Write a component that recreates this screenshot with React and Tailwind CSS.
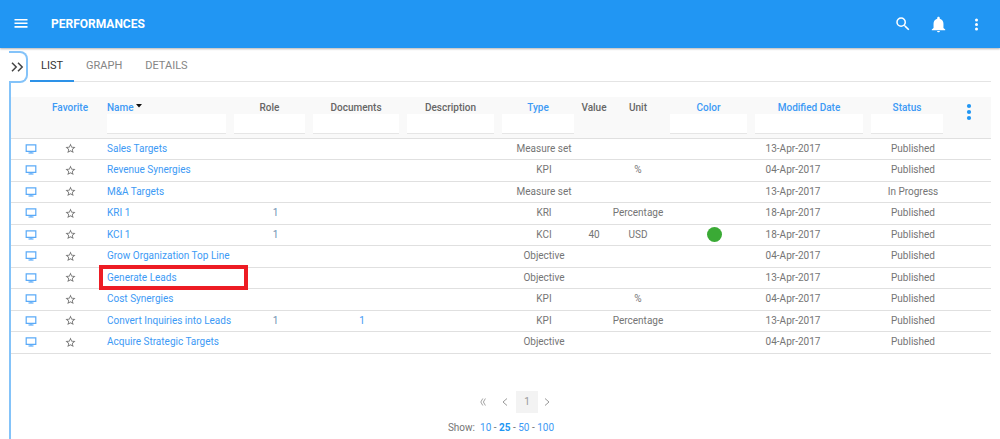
import React, { useState } from 'react';

const columns = [
  { key: 'open', width: 'w-[40px]' },
  { key: 'favorite', label: 'Favorite', width: 'w-[38px]', sortable: true },
  { key: 'name', label: 'Name', width: 'w-[141px]', sortable: true, filter: true, sorted: true },
  { key: 'role', label: 'Role', width: 'w-[79px]', filter: true },
  { key: 'documents', label: 'Documents', width: 'w-[94px]', filter: true },
  { key: 'description', label: 'Description', width: 'w-[95px]', filter: true },
  { key: 'type', label: 'Type', width: 'w-[80px]', sortable: true, filter: true },
  { key: 'value', label: 'Value', width: 'w-[32px]' },
  { key: 'unit', label: 'Unit', width: 'w-[56px]' },
  { key: 'color', label: 'Color', width: 'w-[85px]', sortable: true, filter: true },
  { key: 'modified', label: 'Modified Date', width: 'w-[116px]', sortable: true, filter: true },
  { key: 'status', label: 'Status', width: 'w-[80px]', sortable: true, filter: true },
  { key: 'menu', width: 'w-[44px]' },
];

const rows = [
  { name: 'Sales Targets', type: 'Measure set', modified: '13-Apr-2017', status: 'Published' },
  { name: 'Revenue Synergies', type: 'KPI', unit: '%', modified: '04-Apr-2017', status: 'Published' },
  { name: 'M&A Targets', type: 'Measure set', modified: '13-Apr-2017', status: 'In Progress' },
  { name: 'KRI 1', role: '1', type: 'KRI', unit: 'Percentage', modified: '18-Apr-2017', status: 'Published' },
  { name: 'KCI 1', role: '1', type: 'KCI', value: '40', unit: 'USD', color: true, modified: '18-Apr-2017', status: 'Published' },
  { name: 'Grow Organization Top Line', type: 'Objective', modified: '04-Apr-2017', status: 'Published' },
  { name: 'Generate Leads', type: 'Objective', modified: '13-Apr-2017', status: 'Published', marked: true },
  { name: 'Cost Synergies', type: 'KPI', unit: '%', modified: '04-Apr-2017', status: 'Published' },
  { name: 'Convert Inquiries into Leads', role: '1', documents: '1', type: 'KPI', unit: 'Percentage', modified: '13-Apr-2017', status: 'Published' },
  { name: 'Acquire Strategic Targets', type: 'Objective', modified: '04-Apr-2017', status: 'Published' },
];

const tabs = ['LIST', 'GRAPH', 'DETAILS'];
const pageSizes = [10, 25, 50, 100];

function MonitorIcon() {
  return (
    <svg viewBox="0 0 12 10" className="block w-3 h-[10px]" fill="none" stroke="#5aaaf8">
      <path d="M1.2 0.900h9.600v6.400H1.200z" strokeWidth="1.200" />
      <path d="M3.500 9h5" strokeWidth="1.2" />
      <path d="M5 8h2" />
    </svg>
  );
}

function StarIcon() {
  return (
    <svg viewBox="1 1 22 22" className="block w-[11px] h-[11px]" fill="#757575">
      <path d="M22 9.24l-7.19-.62L12 2 9.19 8.63 2 9.24l5.46 4.73L5.82 21 12 17.27 18.18 21l-1.63-7.03L22 9.24zM12 15.4l-3.76 2.27 1-4.28-3.32-2.88 4.38-.38L12 6.1l1.71 4.04 4.38.38-3.32 2.88 1 4.28L12 15.4z" />
    </svg>
  );
}

function TopBar() {
  return (
    <header className="flex items-center h-12 pl-[14px] pr-4 bg-[#2196f3] text-white shadow-[0_1px_2px_rgba(0,0,0,0.3)]">
      <button aria-label="Menu">
        <svg viewBox="0 0 14 14" className="block w-[14px] h-[14px]" stroke="currentColor" strokeWidth="1.600">
          <path d="M0.500 2.700h13M0.500 6.300h13M0.500 9.900h13" />
        </svg>
      </button>
      <h1 className="ml-[23px] text-[12px] font-bold">PERFORMANCES</h1>
      <div className="ml-auto flex items-center">
        <button aria-label="Search">
          <svg viewBox="0 0 24 24" className="w-[18px] h-[18px]" fill="currentColor">
            <path d="M15.5 14h-.79l-.28-.27A6.47 6.47 0 0 0 16 9.5 6.5 6.5 0 1 0 9.5 16c1.61 0 3.09-.59 4.23-1.57l.27.28v.79l5 4.99L20.49 19l-4.99-5zm-6 0C7.01 14 5 11.99 5 9.5S7.01 5 9.5 5 14 7.01 14 9.5 11.99 14 9.5 14z" />
          </svg>
        </button>
        <button aria-label="Notifications" className="ml-[18px]">
          <svg viewBox="0 0 24 24" className="w-[17px] h-[17px]" fill="currentColor">
            <path d="M12 23c1.1 0 2-.9 2-2h-4c0 1.1.89 2 2 2zm7-6v-6c0-3.5-1.9-6.300-5.200-7.200V3c0-1-.8-1.800-1.800-1.800s-1.800.8-1.800 1.800v.8C6.900 4.700 5 7.500 5 11v6l-2.500 2v1.200h19V19z" />
          </svg>
        </button>
        <button aria-label="More" className="ml-[22px]">
          <svg viewBox="0 0 15 15" className="w-[15px] h-[15px]" fill="currentColor">
            <circle cx="7.500" cy="3" r="1.5" />
            <circle cx="7.500" cy="7.500" r="1.5" />
            <circle cx="7.500" cy="12" r="1.5" />
          </svg>
        </button>
      </div>
    </header>
  );
}

function HeaderCell({ column }) {
  const { key, label, sortable, filter, sorted } = column;

  if (key === 'open') return <th aria-label="Open" />;
  if (key === 'menu') {
    return (
      <th className="align-top pt-[6px]">
        <button aria-label="Columns" className="block mx-auto text-[#2196f3]">
          <svg viewBox="0 0 6 18" className="w-[6px] h-[18px]" fill="currentColor">
            <circle cx="3" cy="3" r="2.1" />
            <circle cx="3" cy="9" r="2.1" />
            <circle cx="3" cy="15" r="2.1" />
          </svg>
        </button>
      </th>
    );
  }

  return (
    <th className={`align-top pt-1 font-medium ${key === 'name' ? 'pl-[18px] pr-1 text-left' : filter ? 'px-1' : ''}`}>
      <div className={`h-[13px] leading-[13px] whitespace-nowrap ${sortable ? 'text-[#3d9af5]' : 'text-[#666]'}`}>
        {sortable ? <button>{label}</button> : label}
        {sorted && (
          <svg viewBox="0 0 6 4" className="inline-block w-[6px] h-1 ml-[2px] mb-1" fill="#111">
            <path d="M0 0h6L3 3.500z" />
          </svg>
        )}
      </div>
      {filter && (
        <input
          aria-label={`Filter ${label}`}
          className="block w-full h-5 px-1 bg-white border-b border-[#e6e6e6] outline-none font-normal text-[#666]"
        />
      )}
    </th>
  );
}

function Row({ row }) {
  return (
    <tr className="h-[21px] even:h-[22px] border-b border-[#e0e0e0]">
      <td>
        <button aria-label={`Open ${row.name}`} className="block mx-auto"><MonitorIcon /></button>
      </td>
      <td>
        <button aria-label={`Favorite ${row.name}`} className="block mx-auto"><StarIcon /></button>
      </td>
      <td className="relative pl-[18px] text-left whitespace-nowrap">
        <a href="#" className="text-[#3d9af5]">{row.name}</a>
        {row.marked && (
          <span className="absolute -top-[3px] -bottom-[2px] left-[10px] -right-[18px] border-4 border-[#ed1c24] pointer-events-none" />
        )}
      </td>
      <td className="pl-3">{row.role && <a href="#" className="text-[#6d8fb3]">{row.role}</a>}</td>
      <td className="pl-3">{row.documents && <a href="#" className="text-[#3d9af5]">{row.documents}</a>}</td>
      <td className="pl-3">{row.description}</td>
      <td className="pl-3 whitespace-nowrap">{row.type}</td>
      <td>{row.value}</td>
      <td>{row.unit}</td>
      <td className="pl-3">
        {row.color && <span className="block mx-auto w-[15px] h-[15px] rounded-full bg-[#3aaa35]" />}
      </td>
      <td className="pr-8 whitespace-nowrap">{row.modified}</td>
      <td className="pl-3 whitespace-nowrap">{row.status}</td>
      <td />
    </tr>
  );
}

export default function App() {
  const [activeTab, setActiveTab] = useState('LIST');
  const [pageSize, setPageSize] = useState(25);

  return (
    <div className="min-h-screen flex flex-col bg-white font-[Roboto,sans-serif] text-[10px] leading-[14px] text-[#757575]">
      <TopBar />

      <main className="flex-1 flex flex-col ml-[9px] mr-[9px] pt-[3px]">
        <div className="flex">
          <button
            aria-label="Expand panel"
            className="flex items-center w-[19px] h-8 mr-[2px] pl-[2px] border-2 border-l-0 border-[#84c3f9] rounded-r-lg text-[#444]"
          >
            <svg viewBox="0 0 13 10" className="w-[13px] h-[10px] shrink-0" fill="none" stroke="currentColor" strokeWidth="1.500">
              <path d="M1 0.800L5.200 5 1 9.200M7 0.800L11.200 5 7 9.200" />
            </svg>
          </button>
          <nav className="flex flex-1 h-[31px] border-b border-[#e4e4e4] text-[11px]">
            {tabs.map(tab => (
              <button
                key={tab}
                onClick={() => setActiveTab(tab)}
                className={`px-[11px] mr-px -mb-px border-b-2 ${
                  activeTab === tab ? 'text-[#333] border-[#2d92e8]' : 'text-[#858585] border-transparent'
                }`}
              >
                {tab}
              </button>
            ))}
          </nav>
        </div>

        <div className="flex-1 -mt-px pt-[15px] border-l-2 border-[#84c3f9]">
          <table className="w-full table-fixed border-collapse text-center">
            <colgroup>
              {columns.map(c => <col key={c.key} className={c.width} />)}
            </colgroup>
            <thead>
              <tr className="h-[41px] bg-[#f9f9f9] border-b border-[#e0e0e0]">
                {columns.map(c => <HeaderCell key={c.key} column={c} />)}
              </tr>
            </thead>
            <tbody>
              {rows.map(row => <Row key={row.name} row={row} />)}
            </tbody>
          </table>

          <div className="flex justify-center items-center mt-[37px] pl-7 text-[#999]">
            <button aria-label="First page" className="mr-4">
              <svg viewBox="0 0 6 8" className="w-[6px] h-2" fill="none" stroke="currentColor" strokeWidth="0.900">
                <path d="M2.800 0.500L0.800 4l2 3.500M5.400 0.500l-2 3.500 2 3.500" />
              </svg>
            </button>
            <button aria-label="Previous page" className="mr-2">
              <svg viewBox="0 0 6 8" className="w-[6px] h-2" fill="none" stroke="currentColor">
                <path d="M5 0.500L1 4l4 3.500" />
              </svg>
            </button>
            <button className="w-[22px] h-[22px] bg-[#f3f3f3]">1</button>
            <button aria-label="Next page" className="ml-[6px]">
              <svg viewBox="0 0 6 8" className="w-[6px] h-2" fill="none" stroke="currentColor">
                <path d="M1 0.500L5 4 1 7.500" />
              </svg>
            </button>
          </div>

          <div className="flex justify-center mt-2">
            <span className="mr-[5px]">Show:</span>
            {pageSizes.map((size, idx) => (
              <span key={size} className="whitespace-pre">
                {idx > 0 && ' - '}
                <button
                  onClick={() => setPageSize(size)}
                  className={pageSize === size ? 'font-bold text-[#2196f3]' : 'text-[#3d9af5]'}
                >
                  {size}
                </button>
              </span>
            ))}
          </div>
        </div>
      </main>
    </div>
  );
}
